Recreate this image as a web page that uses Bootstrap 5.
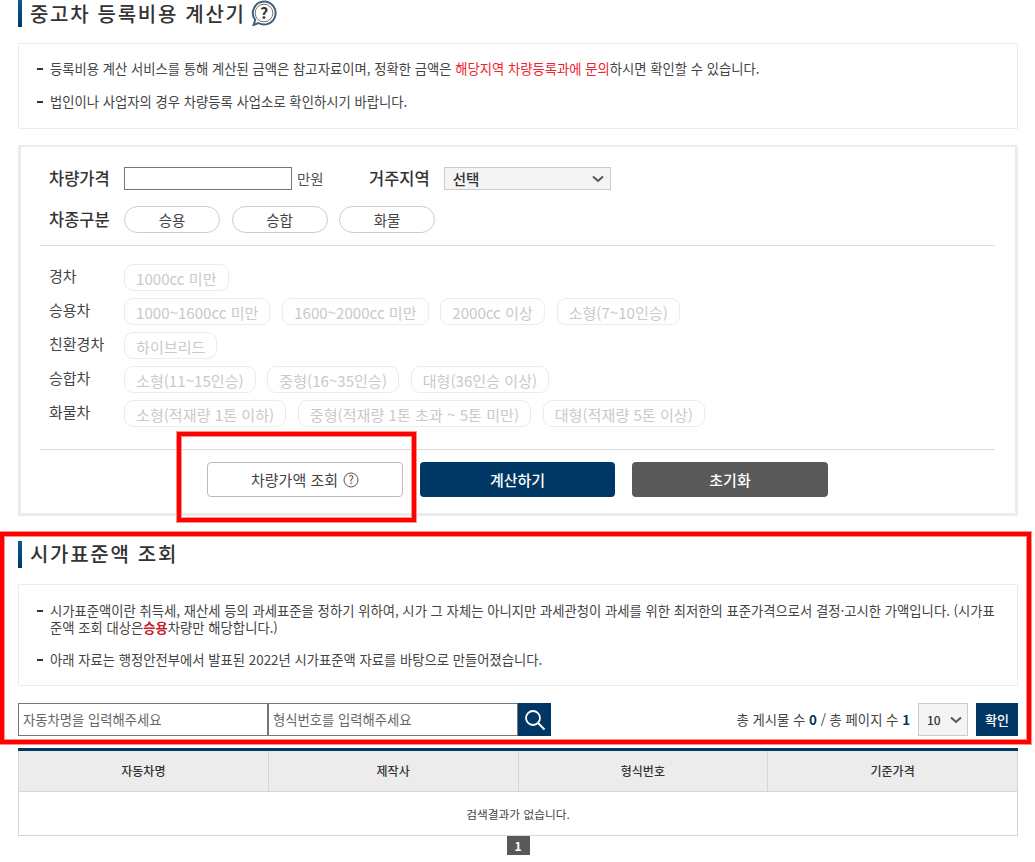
<!DOCTYPE html>
<html lang="ko">
<head>
<meta charset="utf-8">
<title>중고차 등록비용 계산기</title>
<link href="https://cdn.jsdelivr.net/npm/bootstrap@5.3.0/dist/css/bootstrap.min.css" rel="stylesheet">
<style>
html,body{margin:0;background:#fff}
body{font-family:"Noto Sans CJK KR","Noto Sans",sans-serif;color:#333;font-size:13px;position:relative;height:862px;overflow:hidden}
.pg{width:1000px;margin-left:18px}
.ttl{height:27px;border-left:4px solid #003764;border-image:linear-gradient(#0d5a9a,#003764) 1;padding-left:8px;font-size:20px;font-weight:500;line-height:25px;letter-spacing:1.7px;color:#333;margin:0}
.qmark{margin-left:5px;vertical-align:-4px}
.note{border:1px solid #ececec;margin-top:16px;padding:9px 13px 9px 17px}
.note ul{list-style:none;margin:0;padding:0}
.note li{position:relative;padding-left:14px;line-height:17px;font-size:13.33px;color:#444}
.note li::before{content:"";position:absolute;left:1px;top:8px;width:6px;height:2px;background:#333}
.note li+li{margin-top:15px}
.t1 li+li{margin-top:16px}
.redt{color:#f0222c}
.redb{color:#c8202c;font-weight:700}
.calc{border:3px solid #ececec;border-top-width:2px;margin-top:16px;height:371px;padding:20px 20px 0 19px}
.lab{font-size:16.5px;font-weight:500;color:#333;line-height:23px}
.lab1{width:84px;padding-left:9px;flex:none}
.tinp{width:168px;height:23px;border:1px solid #767676;background:#fff;padding:0 4px}
.unit{color:#555;margin-left:5px;font-size:14.5px;line-height:20px;width:72px}
.sel{appearance:none;height:23px;border:1px solid #ccc;background:#f4f4f4 url("data:image/svg+xml,%3Csvg xmlns='http://www.w3.org/2000/svg' width='12' height='8'%3E%3Cpath d='M1 1.5l5 4.5 5-4.5' fill='none' stroke='%23555' stroke-width='2'/%3E%3C/svg%3E") no-repeat right 6px center;font-family:inherit;color:#333;font-weight:500}
.sel1{width:167px;margin-left:14px;padding:0 8px;font-size:14.5px}
.pill{width:96px;height:27px;border:1px solid #ccc;border-radius:14px;background:#fff;color:#444;font-size:14.5px;line-height:24px;text-align:center;padding:0}
.pillrow{gap:11.5px}
.sep{border-top:1px solid #ddd;margin:0}
.typ{display:flex;align-items:flex-start;height:34px}
.typ>span{width:84px;flex:none;padding-left:9px;font-size:15px;line-height:24px;color:#444}
.chips{display:flex;gap:11.7px}
.chip{border:1px solid #ececec;border-radius:9px;height:27px;padding:0 11px;line-height:27px;font-size:15.1px;color:#c9c9c9;background:#fff;white-space:nowrap;font-family:"Noto Sans CJK KR",sans-serif}
.acts{display:flex;margin-top:12px;padding-left:167px}
.ab{height:35px;width:196px;border-radius:4px;font-size:15px;font-weight:500;color:#fff;border:0;padding:0;line-height:35px}
.ab0{background:#fff;border:1px solid #bbb;color:#444;font-weight:400;display:flex;align-items:center;justify-content:center;gap:5px}
.ab1{background:#003764;margin-left:17px;width:195px}
.ab2{background:#595959;margin-left:17px}
.sec{margin-top:25px}
.srch{display:flex;margin-top:17px;height:33px}
.fin{width:250px;height:33px;border:1px solid #767676;padding:0 4px;font-size:13.33px;color:#555;line-height:31px;background:#fff}
.fin::placeholder{color:#666}
.sbtn{width:33px;height:33px;background:#003764;border:0;padding:0;display:flex;align-items:center;justify-content:center}
.cnt{margin-left:auto;font-size:13.33px;color:#444;line-height:33px;padding-right:8px}
.cnt b{color:#003764;font-weight:700}
.sel2{width:50px;height:33px;padding:0 8px;font-size:12px;border-color:#ccc;background-position:right 5px center}
.ok{width:42px;height:33px;background:#003764;color:#fff;border:0;margin-left:8px;font-size:13px;font-weight:500;padding:0}
.grid{width:1000px;margin:12px 0 0;border-collapse:collapse;table-layout:fixed;border-top:3px solid #003764}
.grid th{height:42px;background:#ececec;border:1px solid #d5d5d5;border-top:0;text-align:center;font-size:12px;font-weight:500;color:#333;padding:0}
.grid td{height:44px;border:1px solid #d5d5d5;text-align:center;font-size:11.7px;color:#444;padding:0}
.pager{display:flex;justify-content:center;height:19px}
.pager span{width:23px;height:19px;background:#595959;color:#fff;font-size:12px;font-weight:700;text-align:center;line-height:19px}
.hl{position:absolute;border:4px solid #f00;box-shadow:0 0 0 1px #ff8f8f,inset 0 0 0 1px #ff8f8f;pointer-events:none}
.hl1{left:177px;top:432px;width:239px;height:90px}
.hl2{left:0;top:532px;width:1031px;height:212px}
</style>
</head>
<body>
<div class="pg">
  <h2 class="ttl">중고차 등록비용 계산기<svg class="qmark" width="26" height="26" viewBox="0 0 26 26"><path d="M13 1.5a11.5 11.5 0 1 1-5.6 21.5L2.5 25l1.8-5A11.5 11.5 0 0 1 13 1.5z" fill="none" stroke="#3f607c" stroke-width="2"/><circle cx="13" cy="13" r="8.8" fill="none" stroke="#777" stroke-width="1"/><text x="13" y="18.5" text-anchor="middle" font-size="16" font-weight="700" fill="#333" letter-spacing="0">?</text></svg></h2>
  <div class="note t1" style="padding-top:16px;padding-bottom:18px">
    <ul>
      <li>등록비용 계산 서비스를 통해 계산된 금액은 참고자료이며, 정확한 금액은 <span class="redt">해당지역 차량등록과에 문의</span>하시면 확인할 수 있습니다.</li>
      <li>법인이나 사업자의 경우 차량등록 사업소로 확인하시기 바랍니다.</li>
    </ul>
  </div>
  <div class="calc">
    <div class="d-flex align-items-center">
      <span class="lab lab1">차량가격</span>
      <input class="tinp" type="text" aria-label="차량가격">
      <span class="unit">만원</span>
      <span class="lab">거주지역</span>
      <select class="sel sel1" aria-label="거주지역"><option>선택</option></select>
    </div>
    <div class="d-flex align-items-center" style="margin-top:16px">
      <span class="lab lab1">차종구분</span>
      <div class="d-flex pillrow">
        <button class="pill" type="button">승용</button>
        <button class="pill" type="button">승합</button>
        <button class="pill" type="button">화물</button>
      </div>
    </div>
    <hr class="sep" style="margin-top:12px;margin-bottom:18px;opacity:1">
    <div class="typ"><span>경차</span><div class="chips"><div class="chip">1000cc 미만</div></div></div>
    <div class="typ"><span>승용차</span><div class="chips"><div class="chip">1000~1600cc 미만</div><div class="chip">1600~2000cc 미만</div><div class="chip">2000cc 이상</div><div class="chip">소형(7~10인승)</div></div></div>
    <div class="typ"><span>친환경차</span><div class="chips"><div class="chip">하이브리드</div></div></div>
    <div class="typ"><span>승합차</span><div class="chips"><div class="chip">소형(11~15인승)</div><div class="chip">중형(16~35인승)</div><div class="chip">대형(36인승 이상)</div></div></div>
    <div class="typ"><span>화물차</span><div class="chips"><div class="chip">소형(적재량 1톤 이하)</div><div class="chip">중형(적재량 1톤 초과 ~ 5톤 미만)</div><div class="chip">대형(적재량 5톤 이상)</div></div></div>
    <hr class="sep" style="margin-top:15px;margin-bottom:0;opacity:1">
    <div class="acts">
      <button class="ab ab0" type="button">차량가액 조회<svg width="16" height="16" viewBox="0 0 16 16"><circle cx="8" cy="8" r="7" fill="none" stroke="#555"/><text x="8" y="12" text-anchor="middle" font-size="11" fill="#444">?</text></svg></button>
      <button class="ab ab1" type="button">계산하기</button>
      <button class="ab ab2" type="button">초기화</button>
    </div>
  </div>
  <div class="sec">
    <h2 class="ttl">시가표준액 조회</h2>
    <div class="note" style="padding-top:17px;padding-bottom:17px">
      <ul>
        <li>시가표준액이란 취득세, 재산세 등의 과세표준을 정하기 위하여, 시가 그 자체는 아니지만 과세관청이 과세를 위한 최저한의 표준가격으로서 결정·고시한 가액입니다. (시가표준액 조회 대상은<span class="redb">승용</span>차량만 해당합니다.)</li>
        <li>아래 자료는 행정안전부에서 발표된 2022년 시가표준액 자료를 바탕으로 만들어졌습니다.</li>
      </ul>
    </div>
    <div class="srch">
      <input class="fin" placeholder="자동차명을 입력해주세요" aria-label="자동차명">
      <input class="fin" placeholder="형식번호를 입력해주세요" aria-label="형식번호">
      <button class="sbtn" type="button" aria-label="검색"><svg width="22" height="22" viewBox="0 0 22 22"><circle cx="9" cy="9" r="7" fill="none" stroke="#fff" stroke-width="1.8"/><path d="M14 14l6.5 6.5" stroke="#fff" stroke-width="2"/></svg></button>
      <div class="cnt">총 게시물 수 <b>0</b> / 총 페이지 수 <b>1</b></div>
      <select class="sel sel2" aria-label="개수"><option>10</option></select>
      <button class="ok" type="button">확인</button>
    </div>
  </div>
  <table class="grid">
    <thead><tr><th>자동차명</th><th>제작사</th><th>형식번호</th><th>기준가격</th></tr></thead>
    <tbody><tr><td colspan="4">검색결과가 없습니다.</td></tr></tbody>
  </table>
  <div class="pager"><span>1</span></div>
</div>
<div class="hl hl1"></div>
<div class="hl hl2"></div>
</body>
</html>
